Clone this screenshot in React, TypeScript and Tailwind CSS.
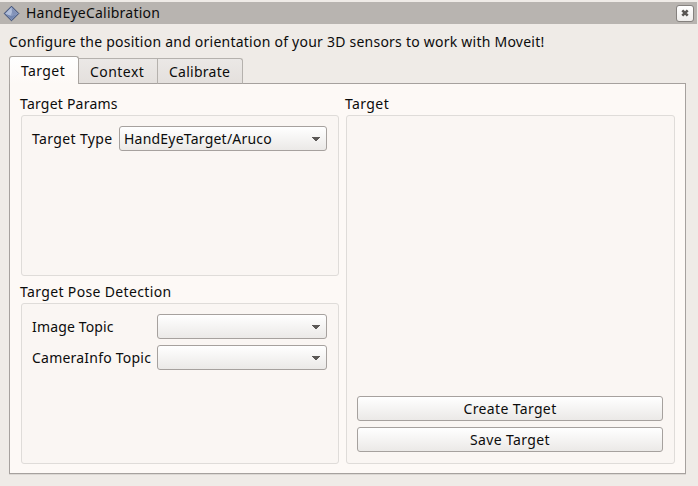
import type { ReactNode } from "react";

function Combo({ text, className }: { text?: string; className: string }) {
  return (
    <button
      className={`flex h-[25px] items-center justify-between rounded-[3px] border border-[#a6a19e] bg-linear-to-b from-white to-[#ebe9e7] pr-[6px] pl-[4px] ${className}`}
    >
      <span className="tracking-[0.22px]">{text}</span>
      <svg width="8" height="4" viewBox="0 0 8 4" className="mt-px" shapeRendering="crispEdges">
        <path d="M0 0h8v1H7v1H6v1H5v1H3V3H2V2H1V1H0z" fill="#5b5856" />
      </svg>
    </button>
  );
}

function Group({
  title,
  titleClass,
  className,
  children,
}: {
  title: string;
  titleClass: string;
  className: string;
  children?: ReactNode;
}) {
  return (
    <section className="flex flex-col">
      <h2 className={`-ml-px h-[22px] leading-[22px] ${titleClass}`}>{title}</h2>
      <div className={`flex flex-col rounded-[3px] border border-[#dfdcd9] bg-[#faf6f3] pt-[10px] pr-[11px] pl-[10px] ${className}`}>
        {children}
      </div>
    </section>
  );
}

function PushButton({ children }: { children: ReactNode }) {
  return (
    <button className="h-[25px] w-[306px] rounded-[3px] border border-[#a6a19e] bg-linear-to-b from-white to-[#ebe9e7] leading-[23px] tracking-[0.36px]">
      {children}
    </button>
  );
}

export default function App() {
  return (
    <div className="h-[486px] w-[698px] overflow-hidden bg-[#efebe7] pt-[2px] font-['Noto_Sans',sans-serif] text-[14px] whitespace-nowrap text-[#0c0c0c]">
      <header className="flex h-[22px] w-[697px] items-center bg-[#b8b4b0] pr-[2px] pl-[3px]">
        <svg width="17" height="17" viewBox="0 0 17 17">
          <path d="M8.5 1.2 15.8 8.5 8.5 15.8 1.2 8.5z" fill="#8c9cc0" stroke="#34466f" strokeWidth="1" />
          <path d="M8.5 2.5 14.5 8.5 10.5 10 8.5 7z" fill="#8292b8" />
          <path d="M8.5 2.5 2.5 8.5 7.5 11 9 7z" fill="#b2bfda" />
          <path d="M3.5 9.5 8.5 14.5 13.5 9.5 8.5 11z" fill="#7386b0" />
        </svg>
        <h1 className="ml-[6px] grow leading-[22px] tracking-[0.23px]">HandEyeCalibration</h1>
        <button className="mr-px flex h-[17px] w-[18px] items-center justify-center rounded-[3px] border border-[#85817e] bg-linear-to-b from-white to-[#efedeb]">
          <svg width="8" height="8" viewBox="0 0 8 8">
            <path d="M1.3 1.3 6.7 6.7M6.7 1.3 1.3 6.7" stroke="#595653" strokeWidth="2.6" />
          </svg>
        </button>
      </header>

      <p className="mt-[8px] ml-[9px] h-[24px] leading-[20px] tracking-[0.235px]">
        Configure the position and orientation of your 3D sensors to work with Moveit!
      </p>

      <nav className="relative z-10 ml-[9px] flex h-[28px] items-end">
        <div className="h-[28px] w-[70px] rounded-t-[3px] border border-b-0 border-[#aaa5a1] bg-linear-to-b from-white to-[#fdf9f6] pl-[11px] leading-[28px] tracking-[0.4px]">Target</div>
        <div className="h-[26px] w-[79px] border-t border-r border-b border-[#b5b1ad] border-b-[#a6a19e] bg-linear-to-b from-[#ebe8e6] to-[#e4e0dd] pl-[11px] leading-[26px] tracking-[0.45px]">Context</div>
        <div className="h-[26px] w-[85px] rounded-tr-[3px] border-t border-r border-b border-[#b5b1ad] border-b-[#a6a19e] bg-linear-to-b from-[#ebe8e6] to-[#e4e0dd] pl-[11px] leading-[26px] tracking-[0.25px]">Calibrate</div>
      </nav>

      <main className="-mt-px ml-[9px] flex h-[391px] w-[677px] gap-[7px] border border-[#a6a19e] bg-[#fdf9f6] pt-[9px] pl-[11px] shadow-[0_1px_0_#dcd8d4]">
        <div className="flex flex-col gap-[5px]">
          <Group title="Target Params" titleClass="tracking-[0.22px]" className="h-[161px] w-[318px]">
            <div className="flex items-center justify-between">
              <label className="tracking-[0.36px]">Target Type</label>
              <Combo text="HandEyeTarget/Aruco" className="w-[208px]" />
            </div>
          </Group>
          <Group title="Target Pose Detection" titleClass="tracking-[0.35px]" className="h-[161px] w-[318px] gap-[6px]">
            <div className="flex items-center justify-between">
              <label className="tracking-[0.15px]">Image Topic</label>
              <Combo className="w-[170px]" />
            </div>
            <div className="flex items-center justify-between">
              <label className="tracking-[0.22px]">CameraInfo Topic</label>
              <Combo className="w-[170px]" />
            </div>
          </Group>
        </div>
        <Group title="Target" titleClass="tracking-[0.4px]" className="h-[349px] w-[329px] justify-end gap-[6px] pb-[11px]">
          <PushButton>Create Target</PushButton>
          <PushButton>Save Target</PushButton>
        </Group>
      </main>
    </div>
  );
}
